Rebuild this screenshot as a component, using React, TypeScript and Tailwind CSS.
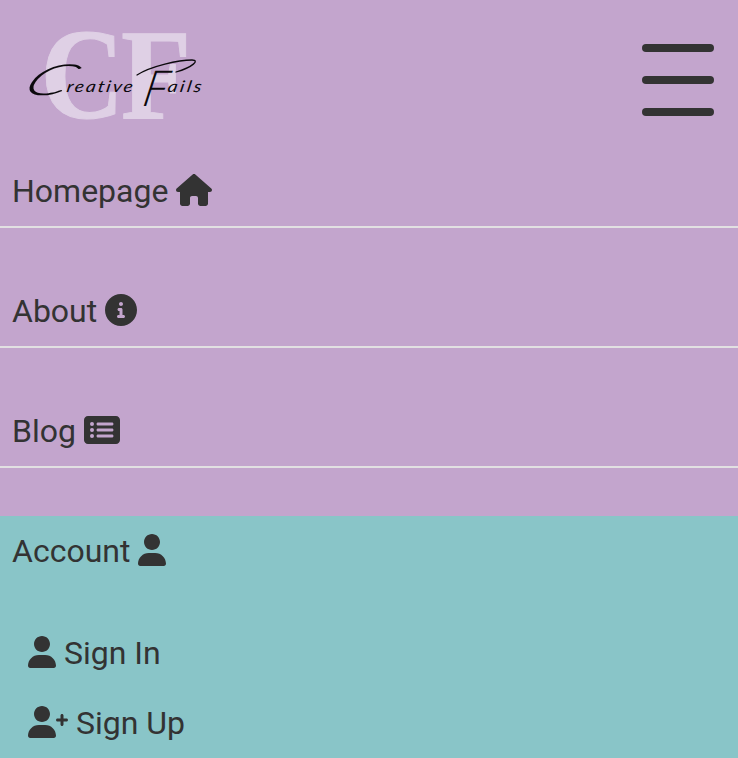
import type { ReactNode } from "react";
import { FaRectangleList } from "react-icons/fa6";

const body = "M224 256c70.7 0 128-57.31 128-128S294.7 0 224 0 96 57.3 96 128s57.3 128 128 128zM274.7 304H173.3C77.61 304 0 381.6 0 477.3 0 496.5 15.52 512 34.66 512h378.7C432.5 512 448 496.5 448 477.3 448 381.6 370.4 304 274.7 304z";

function UserIcon() {
  return <svg viewBox="0 0 448 512" className="h-8 w-7" fill="currentColor"><path d={body} /></svg>;
}

function UserPlusIcon() {
  return (
    <svg viewBox="0 0 640 512" className="h-8 w-10" fill="currentColor">
      <path d={body} />
      <path d="M616 200h-48v-48c0-13.2-10.7-24-24-24s-24 10.75-24 24v48h-48c-13.2 0-24 10.8-24 24s10.75 24 24 24h48v48c0 13.3 10.8 24 24 24s24-10.75 24-24v-48h48c13.3 0 24-10.7 24-24s-10.7-24-24-24z" />
    </svg>
  );
}

function HouseIcon() {
  return (
    <svg viewBox="0 0 576 512" className="h-8 w-9" fill="currentColor">
      <path d="M575.8 255.5c0 18-15 32.1-32 32.1h-32l.7 160.2c0 2.7-.2 5.4-.5 8.1V472c0 22.1-17.9 40-40 40H392c-22.1 0-40-17.9-40-40v-88c0-17.7-14.3-32-32-32h-64c-17.7 0-32 14.3-32 32v88c0 22.1-17.9 40-40 40h-80c-22.1 0-40-17.9-40-40V287.6H32c-18 0-32-14-32-32.1 0-9 3-17 10-24L266.4 8c7-7 15-8 22-8s15 2 21 7l255.4 224.5c8 7 12 15 11 24z" />
    </svg>
  );
}

function InfoIcon() {
  return (
    <svg viewBox="0 0 512 512" className="size-8" fill="currentColor">
      <path d="M256 0C114.6 0 0 114.6 0 256s114.6 256 256 256 256-114.6 256-256S397.4 0 256 0zM256 128c17.67 0 32 14.33 32 32s-14.33 32-32 32-32-14.3-32-32 14.3-32 32-32zM296 384h-80c-13.2 0-24-10.7-24-24s10.75-24 24-24h16v-64h-8c-13.25 0-24-10.75-24-24s10.8-24 24-24h32c13.25 0 24 10.75 24 24v88h16c13.25 0 24 10.75 24 24s-10.7 24-24 24z" />
    </svg>
  );
}

function Logo() {
  return (
    <svg width="184" height="104" viewBox="24 24 184 104" className="overflow-visible" role="img" aria-label="Creative Fails">
      <g className="fill-[#dfd0e5] stroke-[#dfd0e5] font-['Liberation_Serif',serif] font-bold">
        <text transform="translate(40.5 118) scale(.89 1)" fontSize="130">C</text>
        <text transform="translate(121 118) scale(.89 1)" fontSize="129">F</text>
      </g>
      <g className="fill-[#0b090c] font-[Lato,sans-serif] italic [font-variant-ligatures:none]">
        <text className="font-light" transform="translate(19 95) skewX(-34) scale(1.65 1)" fontSize="43">C</text>
        <text transform="translate(66 91.5) skewX(-10) scale(1.2 1)" fontSize="16" textLength="55">reative</text>
        <text className="font-light" transform="translate(141 106) skewX(-12) scale(.9 1)" fontSize="50">F</text>
        <text transform="translate(167 91.5) skewX(-10) scale(1.2 1)" fontSize="16" textLength="28">ails</text>
      </g>
      <path d="M137 75C151 66 179 60 192 60C200 60 193 67 176 72" fill="none" stroke="#0b090c" strokeWidth="1.3" strokeLinecap="round" />
    </svg>
  );
}

function MenuItem({ label, children }: { label: string; children: ReactNode }) {
  return (
    <a className="mb-12 flex h-[72px] items-start gap-2 border-b-2 border-[#e2e0e2] pl-3 pt-[11px]">
      <span>{label}</span>
      <span className="mt-[7px]">{children}</span>
    </a>
  );
}

export default function App() {
  return (
    <div className="flex h-[758px] w-full flex-col overflow-hidden bg-[#c3a5cd] font-[Roboto,sans-serif] text-[32px] leading-[48px] text-[#333333]">
      <header className="flex h-[156px] shrink-0 items-start justify-between pl-6 pr-6 pt-6">
        <Logo />
        <button aria-label="Menu" className="mt-5 flex w-[72px] flex-col gap-6">
          <span className="h-2 rounded-full bg-[#333333]" />
          <span className="h-2 rounded-full bg-[#333333]" />
          <span className="h-2 rounded-full bg-[#333333]" />
        </button>
      </header>
      <nav className="shrink-0">
        <MenuItem label="Homepage"><HouseIcon /></MenuItem>
        <MenuItem label="About"><InfoIcon /></MenuItem>
        <MenuItem label="Blog"><FaRectangleList className="h-8 w-9" /></MenuItem>
      </nav>
      <section className="flex-1 bg-[#89c5c8] pt-[11px]">
        <div className="flex gap-2 pl-3">
          <span>Account</span>
          <span className="mt-[7px]"><UserIcon /></span>
        </div>
        <div className="mt-[54px] flex flex-col gap-[22px] pl-7">
          <a className="flex gap-2"><span className="mt-[7px]"><UserIcon /></span><span>Sign In</span></a>
          <a className="flex gap-2"><span className="mt-[7px]"><UserPlusIcon /></span><span>Sign Up</span></a>
        </div>
      </section>
    </div>
  );
}
